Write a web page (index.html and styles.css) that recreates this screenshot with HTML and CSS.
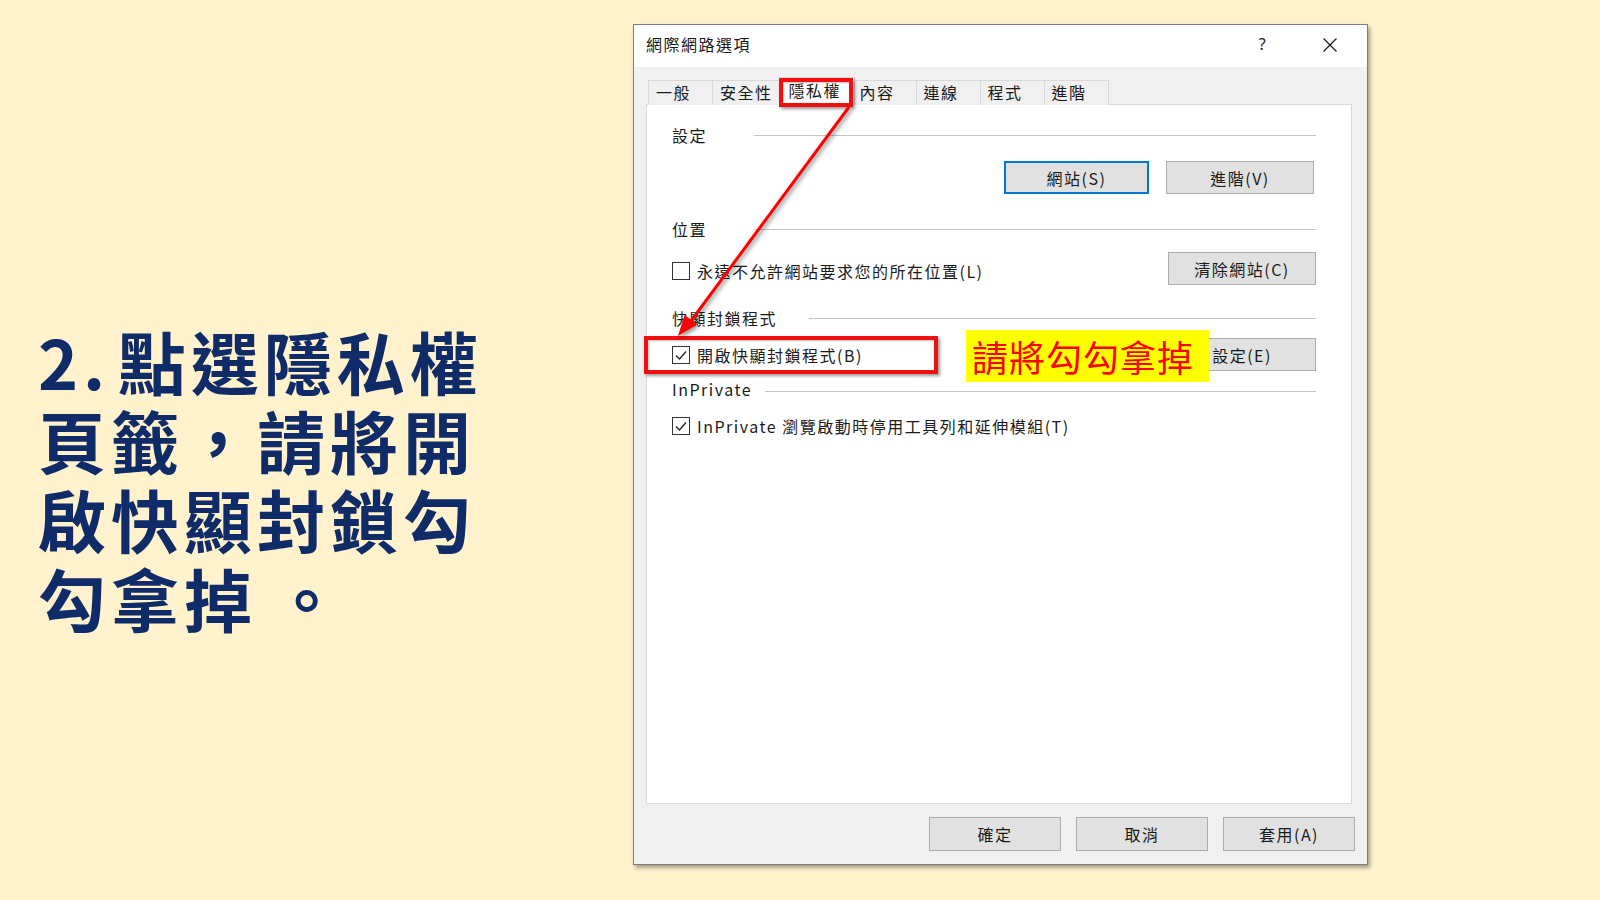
FILE: index.html
```html
<!DOCTYPE html>
<html lang="zh-Hant">
<head>
    <meta charset="UTF-8">
    <meta name="viewport" content="width=device-width, initial-scale=1.0">
    <title>網際網路選項 - 隱私權</title>
    <link rel="stylesheet" href="styles.css">
</head>
<body>
    <div class="slide">
        <!-- Step text -->
        <div class="intro"><span class="step-no">2. </span>點選隱私權<br>頁籤，請將開<br>啟快顯封鎖勾<br>勾拿掉 。</div>

        <!-- Internet options dialog -->
        <div class="dialog">
            <div class="titlebar">
                <span class="title">網際網路選項</span>
                <span class="title-btn help">?</span>
                <span class="title-btn close">
                    <svg width="14" height="14" viewBox="0 0 14 14"><path d="M0.5 0.5 L13.5 13.5 M13.5 0.5 L0.5 13.5" stroke="#111" stroke-width="1.1" fill="none"/></svg>
                </span>
            </div>

            <div class="dialog-body">
                <div class="tabs">
                    <div class="tab">一般</div>
                    <div class="tab">安全性</div>
                    <div class="tab active">隱私權</div>
                    <div class="tab">內容</div>
                    <div class="tab">連線</div>
                    <div class="tab">程式</div>
                    <div class="tab">進階</div>
                </div>

                <div class="panel">
                    <div class="group">
                        <div class="group-head">
                            <span class="group-title">設定</span>
                            <span class="rule"></span>
                        </div>
                        <div class="group-row end first-row">
                            <button class="btn default">網站(S)</button>
                            <button class="btn">進階(V)</button>
                        </div>
                    </div>

                    <div class="group location">
                        <div class="group-head">
                            <span class="group-title">位置</span>
                            <span class="rule"></span>
                        </div>
                        <div class="group-row loose">
                            <label class="check low"><span class="box"></span>永遠不允許網站要求您的所在位置(L)</label>
                            <button class="btn">清除網站(C)</button>
                        </div>
                    </div>

                    <div class="group popup">
                        <div class="group-head">
                            <span class="group-title wide">快顯封鎖程式</span>
                            <span class="rule"></span>
                        </div>
                        <div class="group-row">
                            <label class="check"><span class="box checked"><svg width="16" height="16" viewBox="0 0 16 16"><path d="M3 8.5 L6.5 12 L13 4.5" stroke="#222" stroke-width="1.3" fill="none"/></svg></span>開啟快顯封鎖程式(B)</label>
                            <button class="btn">設定(E)</button>
                        </div>
                    </div>

                    <div class="group inprivate">
                        <div class="group-head">
                            <span class="group-title mid">InPrivate</span>
                            <span class="rule low-rule"></span>
                        </div>
                        <div class="group-row last-row">
                            <label class="check"><span class="box checked"><svg width="16" height="16" viewBox="0 0 16 16"><path d="M3 8.5 L6.5 12 L13 4.5" stroke="#222" stroke-width="1.3" fill="none"/></svg></span>InPrivate 瀏覽啟動時停用工具列和延伸模組(T)</label>
                        </div>
                    </div>
                </div>

                <div class="footer">
                    <button class="btn wide-btn">確定</button>
                    <button class="btn wide-btn">取消</button>
                    <button class="btn wide-btn">套用(A)</button>
                </div>
            </div>

            <!-- Annotations drawn over the screenshot -->
            <div class="mark mark-tab"></div>
            <div class="mark mark-check"></div>
            <div class="note">請將勾勾拿掉</div>
            <svg class="arrow" width="735" height="841" viewBox="0 0 735 841">
                <line x1="215" y1="82" x2="57" y2="296" stroke="#ff0000" stroke-width="3"/>
                <polygon points="44,311 63,299.5 50.5,290" fill="#ff0000"/>
            </svg>
        </div>
    </div>
</body>
</html>
```

FILE: styles.css
```css
* {
    box-sizing: border-box;
}

body {
    margin: 0;
    background-color: #fff2cc;
    font-family: "Noto Sans CJK TC", "Noto Sans", sans-serif;
}

.slide {
    display: flex;
    width: 1600px;
    height: 900px;
    overflow: hidden;
}

.intro {
    width: 633px;
    padding: 321px 0 0 38px;
    font-size: 68px;
    font-weight: bold;
    line-height: 79px;
    letter-spacing: 5px;
    word-spacing: -5px;
    color: #0f2c68;
}

.step-no {
    word-spacing: -13px;
}

/* Dialog window */
.dialog {
    position: relative;
    width: 735px;
    height: 841px;
    margin-top: 24px;
    display: flex;
    flex-direction: column;
    background-color: #f0f0f0;
    border: 1px solid #7d7d7d;
    box-shadow: 2px 3px 4px rgba(0,0,0,0.35);
    font-size: 16px;
    letter-spacing: 1.5px;
    color: #1a1a1a;
}

.titlebar {
    display: flex;
    align-items: center;
    height: 42px;
    padding: 0 14px 5px 12px;
    background-color: white;
}

.title {
    flex: 1;
}

.title-btn {
    width: 46px;
    display: flex;
    justify-content: center;
    align-items: center;
    font-family: "Noto Sans", sans-serif;
    font-size: 16px;
}

.title-btn.help {
    margin-right: 21px;
}

.title-btn.close {
    margin-top: 3px;
}

.dialog-body {
    flex: 1;
    display: flex;
    flex-direction: column;
    padding: 13px 15px 13px 12px;
}

.tabs {
    display: flex;
    align-items: flex-end;
    height: 25px;
    margin: 0 0 -1px 2px;
    position: relative;
    z-index: 1;
}

.tab {
    height: 25px;
    min-width: 65px;
    padding: 0 6px 2px 7px;
    display: flex;
    align-items: center;
    background-color: #f0f0f0;
    border: 1px solid #d9d9d9;
    border-bottom: none;
    margin-right: -1px;
}

.tab.active {
    height: 28px;
    min-width: 76px;
    padding: 0 6px 4px 9px;
    margin-right: -3px;
    background-color: white;
    position: relative;
    z-index: 2;
}

.panel {
    flex: 1;
    background-color: white;
    border: 1px solid #d9d9d9;
    padding: 20px 35px 0 25px;
}

.group-head {
    display: flex;
    align-items: center;
    height: 20px;
}

.group-title {
    width: 82px;
}

.group-title.wide {
    width: 137px;
}

.group-title.mid {
    width: 93px;
}

.rule {
    flex: 1;
    border-top: 1px solid #c4c4c4;
}

.rule.low-rule {
    margin-top: 5px;
}

.group-row {
    display: flex;
    align-items: center;
    justify-content: space-between;
    margin-top: 10px;
}

.group-row.end {
    justify-content: flex-end;
    gap: 17px;
    padding-right: 2px;
}

.first-row {
    margin-top: 16px;
}

.group-row.loose {
    margin-top: 13px;
}

.group-row.last-row {
    margin-top: 15px;
}

.location {
    margin-top: 25px;
}

.popup {
    margin-top: 23px;
}

.inprivate {
    margin-top: 8px;
}

.check {
    display: flex;
    align-items: center;
    gap: 7px;
}

.check.low {
    margin-top: 5px;
}

.box {
    width: 18px;
    height: 18px;
    border: 1px solid #333;
    background-color: white;
    display: flex;
    align-items: center;
    justify-content: center;
}

.btn {
    width: 148px;
    height: 33px;
    background-color: #e1e1e1;
    border: 1px solid #adadad;
    font-family: inherit;
    font-size: 16px;
    letter-spacing: 1.5px;
    color: #1a1a1a;
    padding: 0;
}

.btn.default {
    width: 145px;
    border: 2px solid #0078d7;
}

.footer {
    display: flex;
    justify-content: flex-end;
    gap: 15px;
    margin: 13px -3px 0 0;
}

.btn.wide-btn {
    width: 132px;
    height: 34px;
}

/* Red annotation boxes, note and arrow */
.mark {
    position: absolute;
    border: 4px solid #f01010;
    box-shadow: 2px 2px 3px rgba(0,0,0,0.4), inset 1px 1px 2px rgba(0,0,0,0.25);
    z-index: 5;
}

.mark-tab {
    left: 145px;
    top: 53px;
    width: 74px;
    height: 29px;
}

.mark-check {
    left: 10px;
    top: 311px;
    width: 294px;
    height: 38px;
}

.note {
    position: absolute;
    left: 332px;
    top: 305px;
    width: 243px;
    height: 52px;
    padding-left: 6px;
    display: flex;
    align-items: center;
    background-color: #ffff00;
    color: #ff0000;
    font-size: 36px;
    letter-spacing: 1px;
    z-index: 5;
}

.arrow {
    position: absolute;
    left: 0;
    top: 0;
    z-index: 6;
    pointer-events: none;
    filter: drop-shadow(2px 2px 2px rgba(0,0,0,0.45));
}
```
